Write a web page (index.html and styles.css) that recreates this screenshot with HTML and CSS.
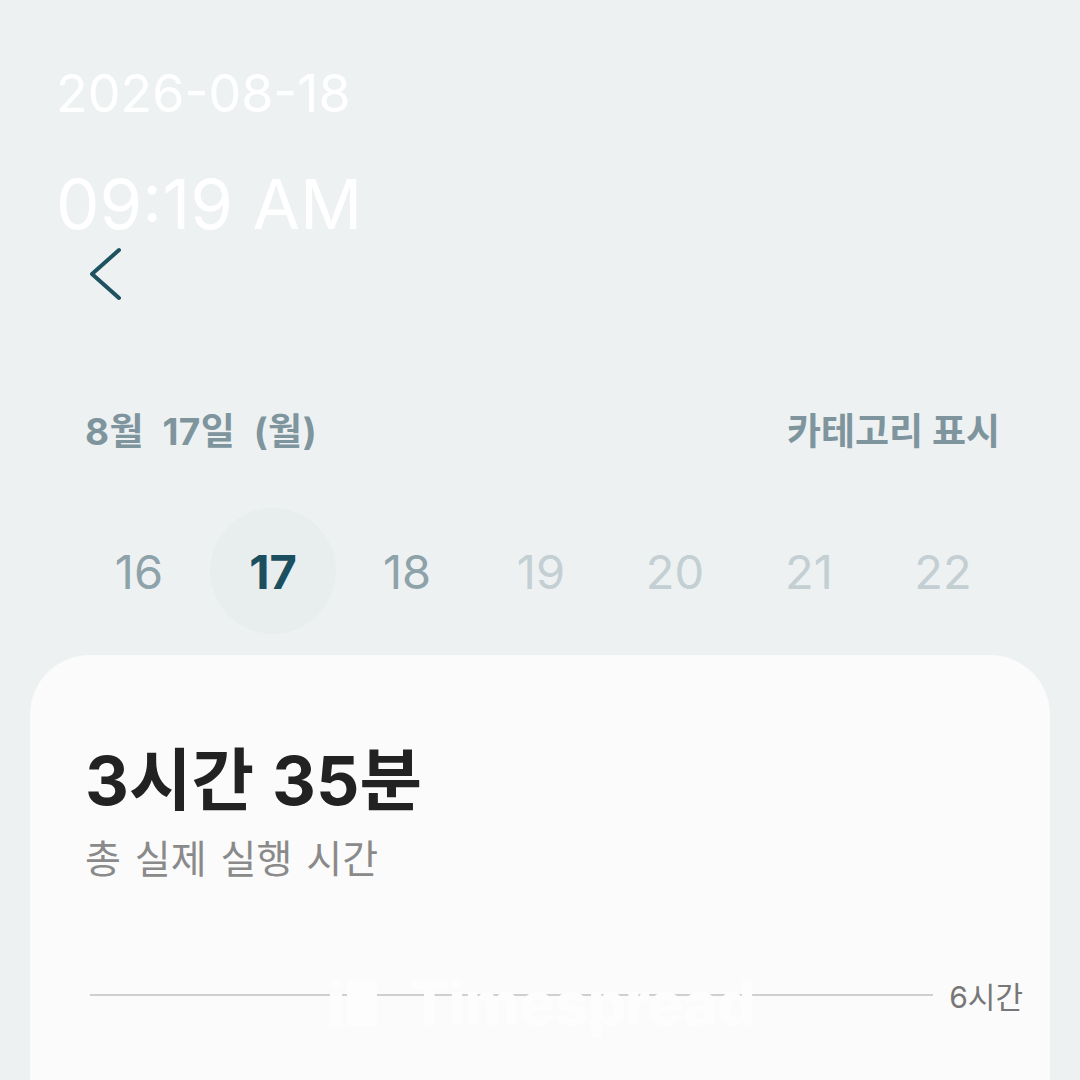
FILE: index.html
```html
<!DOCTYPE html>
<html lang="ko">
<head>
  <meta charset="UTF-8" />
  <meta name="viewport" content="width=device-width, initial-scale=1.0"/>
  <title>Timespread - 8월 17일</title>
  <link rel="stylesheet" href="styles.css">
</head>
<body>
  <header class="clock">
    <p class="clock-date">2026-08-18</p>
    <p class="clock-time">09:19 AM</p>
  </header>

  <nav class="back">
    <svg width="40" height="56" viewBox="0 0 40 56">
      <path d="M31 4 L4 28 L31 52" fill="none" stroke="#1f5260" stroke-width="4" stroke-linecap="round" stroke-linejoin="round"/>
    </svg>
  </nav>

  <section class="day-header">
    <span class="day-title">8월 17일 (월)</span>
    <span>카테고리 표시</span>
  </section>

  <section class="week">
    <span class="day past">16</span>
    <span class="day selected">17</span>
    <span class="day past">18</span>
    <span class="day future">19</span>
    <span class="day future">20</span>
    <span class="day future">21</span>
    <span class="day future">22</span>
  </section>

  <main class="card">
    <h2 class="total">3시간 35분</h2>
    <p class="total-label">총 실제 실행 시간</p>

    <div class="chart-row">
      <div class="chart-line"></div>
      <span class="chart-max">6시간</span>
    </div>

    <div class="watermark">
      <span class="wm-icon">
        <span class="wm-i"><i></i><b></b></span>
        <span class="wm-block"></span>
      </span>
      <span class="wm-text">Timespread</span>
    </div>
  </main>
</body>
</html>
```

FILE: styles.css
```css
body {
  margin: 0;
  background-color: #edf1f2;
  font-family: Inter, "Noto Sans CJK KR", sans-serif;
  height: 1080px;
  overflow: hidden;
}
p, h2 {
  margin: 0;
}
.clock {
  padding: 63px 0 0 56px;
  color: white;
}
.clock-date {
  font-size: 52px;
  line-height: 62px;
}
.clock-time {
  font-size: 69px;
  line-height: 80px;
  margin-top: 39px;
}
.back {
  margin: 2px 0 0 88px;
  height: 56px;
}
.back svg {
  display: block;
}
.day-header {
  display: flex;
  justify-content: space-between;
  margin-top: 105px;
  padding: 0 80px 0 85px;
  font-size: 37px;
  line-height: 50px;
  font-weight: 700;
  color: #7f959e;
}
.day-title {
  word-spacing: 9px;
  letter-spacing: 0.5px;
}
.week {
  display: grid;
  grid-template-columns: repeat(7, 134px);
  margin-top: 51px;
  padding-left: 72px;
}
.day {
  display: flex;
  align-items: center;
  justify-content: center;
  height: 126px;
  font-size: 47px;
  font-weight: 400;
}
.day.past {
  color: #8ea2aa;
}
.day.future {
  color: #c4cfd3;
}
.day.selected {
  justify-self: center;
  width: 126px;
  border-radius: 50%;
  background-color: #e8edee;
  color: #1b4e5e;
  font-weight: 700;
}
.card {
  position: relative;
  box-sizing: border-box;
  margin: 21px 30px 0;
  padding: 87px 55px 0;
  height: 425px;
  background-color: #fbfbfb;
  border-radius: 60px 60px 0 0;
  overflow: hidden;
}
.total {
  font-size: 68px;
  line-height: 76px;
  font-weight: 700;
  color: #222;
  word-spacing: 2px;
}
.total-label {
  margin-top: 18px;
  font-size: 39px;
  line-height: 46px;
  color: #8a8a8a;
  word-spacing: 3px;
}
.chart-row {
  display: flex;
  align-items: center;
  gap: 16px;
  margin: 93px -28px 0 0;
  height: 40px;
  padding-left: 5px;
}
.chart-line {
  flex: 1;
  height: 2px;
  background-color: #cfcfcf;
}
.chart-max {
  font-size: 30px;
  color: #777;
}
.watermark {
  position: absolute;
  left: 300px;
  top: 318px;
  display: flex;
  align-items: center;
  gap: 32px;
  color: #fdfdfd;
}
.wm-icon {
  display: flex;
  gap: 5px;
  height: 46px;
}
.wm-i {
  display: flex;
  flex-direction: column;
  gap: 4px;
  width: 12px;
}
.wm-i i {
  height: 9px;
  background: #fdfdfd;
  border-radius: 4px;
}
.wm-i b {
  flex: 1;
  background: #fdfdfd;
}
.wm-block {
  width: 30px;
  background: #fdfdfd;
}
.wm-text {
  font-size: 60px;
  font-weight: 800;
  line-height: 60px;
  letter-spacing: -1px;
}
```
